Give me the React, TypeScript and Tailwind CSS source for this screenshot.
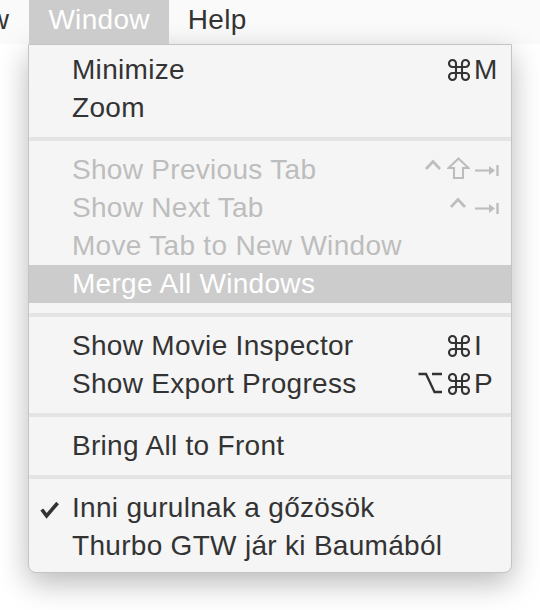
type Mod = "cmd" | "opt" | "ctrl" | "shift" | "tab";

type Item = {
  label: string;
  mods?: Mod[];
  keyChar?: string;
  disabled?: boolean;
  active?: boolean;
  checked?: boolean;
};

const sections: Item[][] = [
  [
    { label: "Minimize", mods: ["cmd"], keyChar: "M" },
    { label: "Zoom" },
  ],
  [
    { label: "Show Previous Tab", mods: ["ctrl", "shift"], keyChar: "tab", disabled: true },
    { label: "Show Next Tab", mods: ["ctrl"], keyChar: "tab", disabled: true },
    { label: "Move Tab to New Window", disabled: true },
    { label: "Merge All Windows", disabled: true, active: true },
  ],
  [
    { label: "Show Movie Inspector", mods: ["cmd"], keyChar: "I" },
    { label: "Show Export Progress", mods: ["opt", "cmd"], keyChar: "P" },
  ],
  [{ label: "Bring All to Front" }],
  [
    { label: "Inni gurulnak a gőzösök", checked: true },
    { label: "Thurbo GTW jár ki Baumából" },
  ],
];

// glyphs are drawn in row coordinates (38px tall row)
function Glyph({ kind, className = "" }: { kind: Mod; className?: string }) {
  if (kind === "cmd")
    return (
      <svg width="22" height="38" viewBox="0 0 22 38" className={className} aria-hidden="true">
        <g transform="translate(0 8)">
          <path
            d="M8 8 V4.5 A3.5 3.5 0 1 0 4.5 8 H17.5 A3.5 3.5 0 1 0 14 4.5 V17.5 A3.5 3.5 0 1 0 17.5 14 H4.5 A3.5 3.5 0 1 0 8 17.5 Z"
            fill="none"
            stroke="currentColor"
            strokeWidth="2.1"
          />
        </g>
      </svg>
    );
  if (kind === "opt")
    return (
      <svg width="24" height="38" viewBox="0 0 24 38" className={className} aria-hidden="true">
        <path d="M0.5 9 H8 L16.5 27 H24 M14 9 H24" fill="none" stroke="currentColor" strokeWidth="2.3" />
      </svg>
    );
  if (kind === "ctrl")
    return (
      <svg width="16" height="38" viewBox="0 0 16 38" className={className} aria-hidden="true">
        <path d="M1 18 L8 10.5 L15 18" fill="none" stroke="currentColor" strokeWidth="2.6" />
      </svg>
    );
  if (kind === "shift")
    return (
      <svg width="23" height="38" viewBox="0 0 23 38" className={className} aria-hidden="true">
        <path
          d="M11.5 7.5 L21.5 17 H16 V27 H7 V17 H1.5 Z"
          fill="none"
          stroke="currentColor"
          strokeWidth="2.1"
          strokeLinejoin="miter"
        />
      </svg>
    );
  return (
    <svg width="25" height="38" viewBox="0 0 25 38" className={className} aria-hidden="true">
      <path d="M0 19.5 H15" stroke="currentColor" strokeWidth="2.1" />
      <path d="M14 15 L20 19.5 L14 24 Z" fill="currentColor" />
      <path d="M22.5 14 V25" stroke="currentColor" strokeWidth="2.4" />
    </svg>
  );
}

function Check() {
  return (
    <svg width="20" height="38" viewBox="0 0 20 38" aria-hidden="true">
      <path d="M1.8 20.5 L6.6 26.8 L17.6 14" fill="none" stroke="currentColor" strokeWidth="3.6" />
    </svg>
  );
}

function Row({ item }: { item: Item }) {
  const color = item.active
    ? "bg-[#cccccc] text-white"
    : item.disabled
      ? "text-[#bdbdbd]"
      : "text-[#333333]";
  const onlyCtrl = item.mods?.length === 1 && item.mods[0] === "ctrl";
  return (
    <div className={`flex h-[38px] pl-[11px] pr-[11px] ${color}`}>
      <div className="w-[32px] flex">{item.checked && <Check />}</div>
      <div className="flex-1 leading-[38px] whitespace-nowrap">{item.label}</div>
      {item.keyChar && (
        <div className="flex">
          <div className={`flex gap-[6px] ${onlyCtrl ? "mr-[4px]" : ""}`}>
            {item.mods?.map((m) => <Glyph key={m} kind={m} />)}
          </div>
          <div className="w-[26px] ml-[4px] leading-[38px] flex">
            {item.keyChar === "tab" ? <Glyph kind="tab" className="ml-[1px]" /> : item.keyChar}
          </div>
        </div>
      )}
    </div>
  );
}

export default function App() {
  return (
    <div className="w-[540px] h-[610px] bg-white overflow-hidden font-['Liberation_Sans',Arial,sans-serif] text-[28px] tracking-[0.3px]">
      {/* Menu bar */}
      <div className="h-11 bg-[#fafafa] flex text-[#333333] leading-[39px] whitespace-nowrap">
        <span className="-ml-[52px] pr-[20px]">View</span>
        <span className="bg-[#cccccc] text-white px-[19px]">Window</span>
        <span className="px-[19px]">Help</span>
      </div>

      {/* Dropdown */}
      <div className="ml-[28px] w-[484px] bg-[#f5f5f5] border border-[#c4c4c4] rounded-b-[8px] shadow-[0_10px_30px_rgba(0,0,0,0.28)] pt-[6px] pb-[7px]">
        {sections.map((sec, i) => (
          <div key={i}>
            {i > 0 && (
              <div className="h-6 flex items-center">
                <div className="h-1 w-full bg-[#e4e4e4]" />
              </div>
            )}
            {sec.map((item) => (
              <Row key={item.label} item={item} />
            ))}
          </div>
        ))}
      </div>
    </div>
  );
}
